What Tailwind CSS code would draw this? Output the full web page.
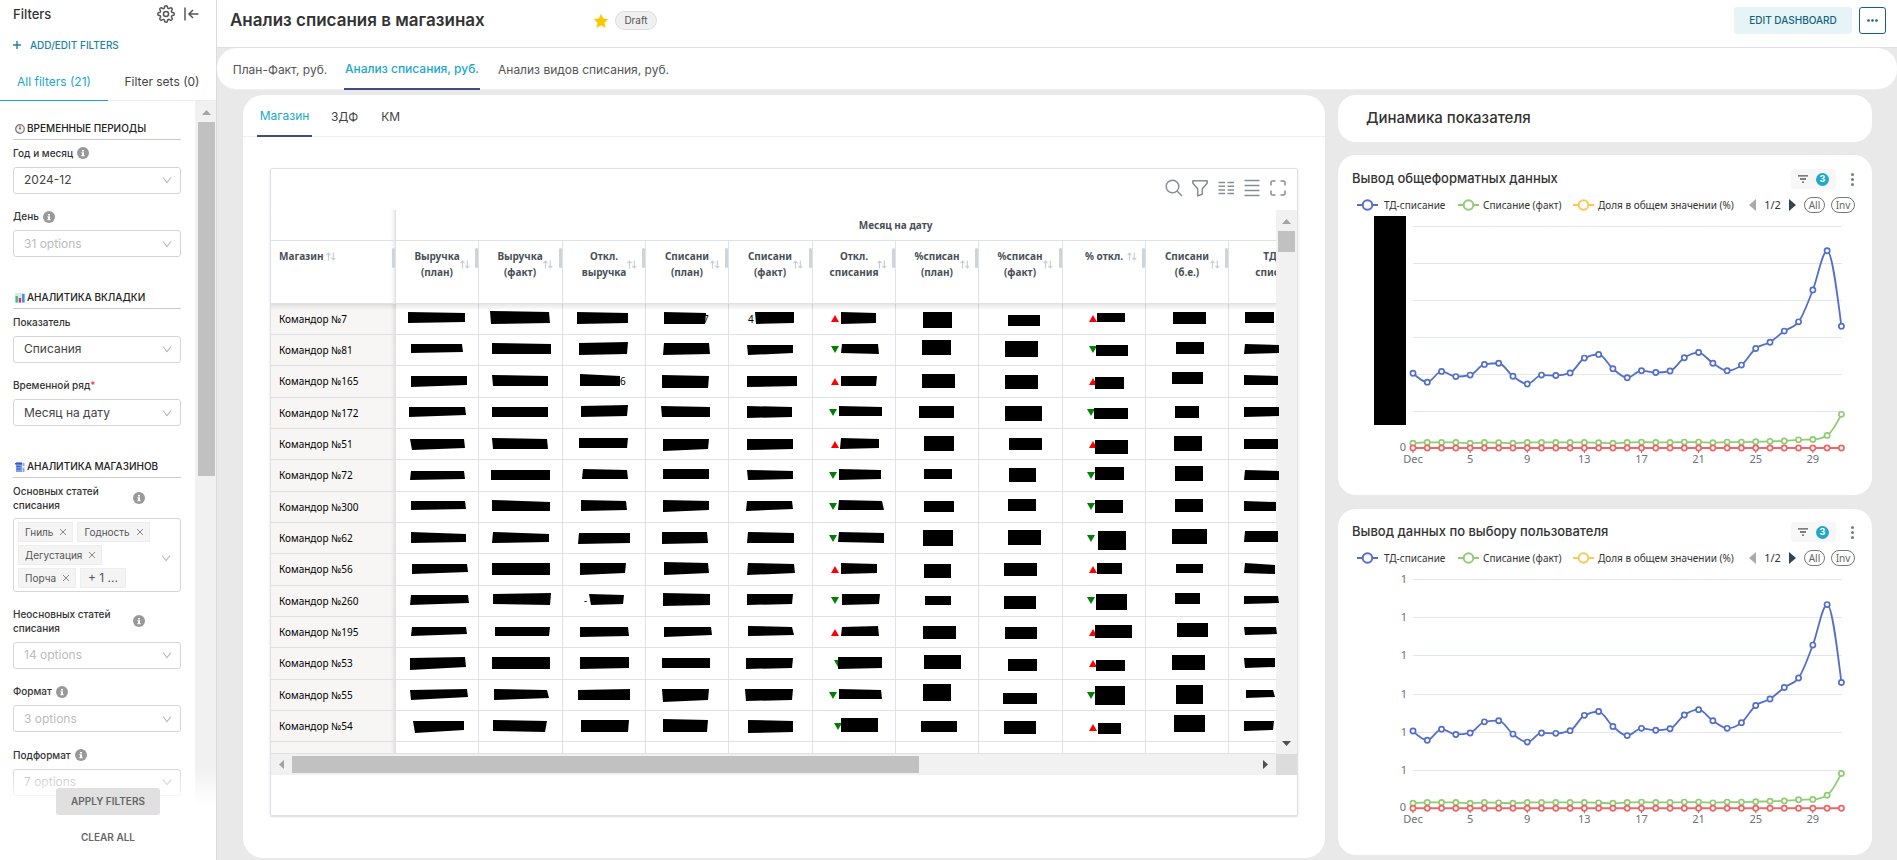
<!DOCTYPE html>
<html lang="ru">
<head>
<meta charset="utf-8">
<title>Анализ списания в магазинах</title>
<script src="https://cdn.jsdelivr.net/npm/@tailwindcss/browser@4"></script>
</head>
<body class="font-['Inter',sans-serif] text-[#333] bg-[#e9e9e9]">
<svg class="hidden">
  <symbol id="info" viewBox="0 0 12 12"><circle cx="6" cy="6" r="6" fill="#999"/><path d="M5 3h2v1.5H5zM4.4 5.2H7v3h.7v1H4.3v-1H5V6.2h-.6z" fill="#fff"/></symbol>
  <symbol id="chev" viewBox="0 0 10 8"><path d="M1 1.5l4 5 4-5" fill="none" stroke="#b8b8b8" stroke-width="1.1"/></symbol>
  <symbol id="sort" viewBox="0 0 10 9"><path d="M2.5 8.5v-7M.5 3.2l2-2 2 2M7.3.5v7M5.3 5.8l2 2 2-2" fill="none" stroke="#c8ced4" stroke-width="1.2"/></symbol>
</svg>
<div class="flex h-screen overflow-hidden">

  <aside class="relative flex w-[217px] shrink-0 flex-col border-r border-[#dcdcdc] bg-white">
    <div class="flex h-[27px] items-center pl-[13px] pr-[17px]">
      <h2 class="flex-1 text-[13px] leading-4 font-medium text-[#333]">Filters</h2>
      <button aria-label="Settings" class="mr-[9px]"><svg class="size-[18px]" viewBox="0 0 24 24" fill="none" stroke="#555" stroke-width="2"><circle cx="12" cy="12" r="3.4"/><path d="M19.4 15a1.65 1.65 0 0 0 .33 1.82l.06.06a2 2 0 0 1 0 2.83 2 2 0 0 1-2.83 0l-.06-.06a1.65 1.65 0 0 0-1.82-.33 1.65 1.65 0 0 0-1 1.51V21a2 2 0 0 1-2 2 2 2 0 0 1-2-2v-.09A1.65 1.65 0 0 0 9 19.4a1.65 1.65 0 0 0-1.82.33l-.06.06a2 2 0 0 1-2.83 0 2 2 0 0 1 0-2.83l.06-.06a1.65 1.65 0 0 0 .33-1.82 1.65 1.65 0 0 0-1.51-1H3a2 2 0 0 1-2-2 2 2 0 0 1 2-2h.09A1.65 1.65 0 0 0 4.6 9a1.65 1.65 0 0 0-.33-1.82l-.06-.06a2 2 0 0 1 0-2.83 2 2 0 0 1 2.83 0l.06.06a1.65 1.65 0 0 0 1.82.33H9a1.65 1.65 0 0 0 1-1.51V3a2 2 0 0 1 2-2 2 2 0 0 1 2 2v.09a1.65 1.65 0 0 0 1 1.51 1.65 1.65 0 0 0 1.82-.33l.06-.06a2 2 0 0 1 2.83 0 2 2 0 0 1 0 2.83l-.06.06a1.65 1.65 0 0 0-.33 1.82V9a1.65 1.65 0 0 0 1.51 1H21a2 2 0 0 1 2 2 2 2 0 0 1-2 2h-.09a1.65 1.65 0 0 0-1.51 1z"/></svg></button>
      <button aria-label="Collapse filters"><svg class="h-[14px] w-[15px]" viewBox="0 0 15 14" fill="none" stroke="#555" stroke-width="1.5"><path d="M1 .5v13M14.5 7H5M9 3L5 7l4 4"/></svg></button>
    </div>
    <button class="flex h-9 items-center gap-[9px] pl-[13px] text-[10px] font-medium text-[#1a85a0]"><svg class="size-2" viewBox="0 0 8 8" stroke="#1a85a0" stroke-width="1.4"><path d="M4 0v8M0 4h8"/></svg>ADD/EDIT FILTERS</button>
    <div class="flex h-[38px] border-b border-[#ececec] text-[12px]">
      <button class="-mb-px w-[108px] border-b border-[#20a7c9] text-[#20a7c9]">All filters (21)</button>
      <button class="flex-1 text-[#444]">Filter sets (0)</button>
    </div>
    <div class="flex min-h-0 flex-1 overflow-hidden">
      <div class="w-[195px] shrink-0 pl-[13px] pr-[14px] pt-[17px]">
        <h3 class="flex h-[22px] items-center gap-[2px] border-b border-[#ccc] pl-[2px] text-[10px] font-medium text-[#222]"><svg class="size-[10px]" viewBox="0 0 10 10" fill="none"><circle cx="5" cy="5" r="4.3" fill="#eee" stroke="#777" stroke-width="1.2"/><path d="M5 5V1.8" stroke="#d33"/><path d="M5 5.5V4" stroke="#444"/></svg>ВРЕМЕННЫЕ ПЕРИОДЫ</h3>
        <label for="ym" class="mt-[5px] flex h-4 items-center gap-1 text-[10px] font-medium">Год и месяц<svg class="size-3"><use href="#info"/></svg></label>
        <div class="relative mt-[5px]"><select id="ym" class="h-[27px] w-full appearance-none rounded-[3px] border border-[#d6d6d6] pl-[10px] text-[12px] text-[#444]"><option>2024-12</option></select><svg class="pointer-events-none absolute right-[9px] top-[10px] h-2 w-[10px]"><use href="#chev"/></svg></div>
        <label for="dd" class="mt-[15px] flex h-4 items-center gap-1 text-[10px] font-medium">День<svg class="size-3"><use href="#info"/></svg></label>
        <div class="relative mt-[5px]"><select id="dd" class="h-[27px] w-full appearance-none rounded-[3px] border border-[#d6d6d6] pl-[10px] text-[12px] text-[#bcbcbc]"><option>31 options</option></select><svg class="pointer-events-none absolute right-[9px] top-[10px] h-2 w-[10px]"><use href="#chev"/></svg></div>

        <h3 class="mt-[30px] flex h-[22px] items-center gap-[2px] border-b border-[#ccc] pl-[2px] text-[10px] font-medium text-[#222]"><svg class="size-[10px]" viewBox="0 0 10 10"><path d="M0 0h10v10H0z" fill="#dfe6ea"/><path d="M.5 3h2.3v6.500H.5z" fill="#1fc96b"/><path d="M3.800 5h2.300v4.500H3.800z" fill="#e5258d"/><path d="M7.200 1h2.300v8.500H7.200z" fill="#3d8fd1"/></svg>АНАЛИТИКА ВКЛАДКИ</h3>
        <label for="ind" class="mt-[5px] flex h-4 items-center text-[10px] font-medium">Показатель</label>
        <div class="relative mt-[5px]"><select id="ind" class="h-[27px] w-full appearance-none rounded-[3px] border border-[#d6d6d6] pl-[10px] text-[12px] text-[#444]"><option>Списания</option></select><svg class="pointer-events-none absolute right-[9px] top-[10px] h-2 w-[10px]"><use href="#chev"/></svg></div>
        <label for="ts" class="mt-[15px] flex h-4 items-center text-[10px] font-medium">Временной ряд<span class="text-[#e04355]">*</span></label>
        <div class="relative mt-[5px]"><select id="ts" class="h-[27px] w-full appearance-none rounded-[3px] border border-[#d6d6d6] pl-[10px] text-[12px] text-[#444]"><option>Месяц на дату</option></select><svg class="pointer-events-none absolute right-[9px] top-[10px] h-2 w-[10px]"><use href="#chev"/></svg></div>

        <h3 class="mt-[30px] flex h-[22px] items-center gap-[2px] border-b border-[#ccc] pl-[2px] text-[10px] font-medium text-[#222]"><svg class="size-[10px]" viewBox="0 0 10 10"><path d="M1 0h6v10H1z" fill="#7f9fe0"/><path d="M0 1h7v1.500H0zM1.500 4h4v1h-4zM1.500 6.500h4v1h-4z" fill="#3558c8"/><path d="M7.500 1h2v3h-2zM7.500 5.500h2V10h-2z" fill="#8da2f2"/></svg>АНАЛИТИКА МАГАЗИНОВ</h3>
        <div id="main-l" class="mt-[5px] flex h-[30px] items-center text-[10px] leading-[14px] font-medium"><span class="w-[120px]">Основных статей<br>списания</span><svg class="size-3"><use href="#info"/></svg></div>
        <div role="group" aria-labelledby="main-l" class="relative mt-[5px] flex h-[74px] flex-wrap content-start gap-x-1 gap-y-[3px] rounded-[3px] border border-[#d6d6d6] py-[3px] pl-1 pr-7 text-[10px] text-[#555]">
          <button class="flex h-5 items-center gap-[7px] border border-[#eee] bg-[#f4f4f4] px-[6px]">Гниль<svg class="size-[6px]" viewBox="0 0 6 6" stroke="#888"><path d="M0 0l6 6M6 0L0 6"/></svg></button>
          <button class="flex h-5 items-center gap-[7px] border border-[#eee] bg-[#f4f4f4] px-[6px]">Годность<svg class="size-[6px]" viewBox="0 0 6 6" stroke="#888"><path d="M0 0l6 6M6 0L0 6"/></svg></button>
          <button class="mr-3 flex h-5 items-center gap-[7px] border border-[#eee] bg-[#f4f4f4] px-[6px]">Дегустация<svg class="size-[6px]" viewBox="0 0 6 6" stroke="#888"><path d="M0 0l6 6M6 0L0 6"/></svg></button>
          <button class="flex h-5 items-center gap-[7px] border border-[#eee] bg-[#f4f4f4] px-[6px]">Порча<svg class="size-[6px]" viewBox="0 0 6 6" stroke="#888"><path d="M0 0l6 6M6 0L0 6"/></svg></button>
          <button class="flex h-5 items-center border border-[#eee] bg-[#f4f4f4] px-[7px] text-[12px]">+ 1 ...</button>
          <svg class="absolute right-[9px] top-[35px] h-2 w-[10px]"><use href="#chev"/></svg>
        </div>
        <label for="nm" class="mt-[14px] flex h-[30px] items-center text-[10px] leading-[14px] font-medium"><span class="w-[120px]">Неосновных статей<br>списания</span><svg class="size-3"><use href="#info"/></svg></label>
        <div class="relative mt-[5px]"><select id="nm" class="h-[27px] w-full appearance-none rounded-[3px] border border-[#d6d6d6] pl-[10px] text-[12px] text-[#bcbcbc]"><option>14 options</option></select><svg class="pointer-events-none absolute right-[9px] top-[10px] h-2 w-[10px]"><use href="#chev"/></svg></div>
        <label for="fm" class="mt-[15px] flex h-4 items-center gap-1 text-[10px] font-medium">Формат<svg class="size-3"><use href="#info"/></svg></label>
        <div class="relative mt-[5px]"><select id="fm" class="h-[27px] w-full appearance-none rounded-[3px] border border-[#d6d6d6] pl-[10px] text-[12px] text-[#bcbcbc]"><option>3 options</option></select><svg class="pointer-events-none absolute right-[9px] top-[10px] h-2 w-[10px]"><use href="#chev"/></svg></div>
        <label for="sf" class="mt-[15px] flex h-4 items-center gap-1 text-[10px] font-medium">Подформат<svg class="size-3"><use href="#info"/></svg></label>
        <div class="relative mt-[5px]"><select id="sf" class="h-[27px] w-full appearance-none rounded-[3px] border border-[#d6d6d6] pl-[10px] text-[12px] text-[#bcbcbc]"><option>7 options</option></select><svg class="pointer-events-none absolute right-[9px] top-[10px] h-2 w-[10px]"><use href="#chev"/></svg></div>
      </div>
      <div class="flex w-[21px] flex-col items-center bg-[#f1f1f1] pl-[1px] pt-[9px]">
        <svg class="mb-[7px] h-[5px] w-[9px]" viewBox="0 0 9 5"><path d="M0 5l4.500-5L9 5z" fill="#a3a3a3"/></svg>
        <div class="h-[354px] w-[17px] bg-[#c1c1c1]"></div>
      </div>
    </div>
    <div class="absolute inset-x-0 bottom-0 flex h-[92px] flex-col items-center bg-linear-to-b from-white/0 via-white via-40% to-white pt-5 text-[10px] font-semibold">
      <button class="h-[27px] w-[104px] shrink-0 rounded-[3px] bg-[#e0e0e0] font-semibold text-[#666]">APPLY FILTERS</button>
      <button class="mt-[9px] h-[27px] w-[104px] shrink-0 font-semibold text-[#666]">CLEAR ALL</button>
    </div>
  </aside>

  <div class="flex min-w-0 flex-1 flex-col">
    <header class="flex h-12 shrink-0 items-start border-b border-[#e0e0e0] bg-white pl-[13px] pr-[11px] pt-[7px]">
      <h1 class="w-[364px] text-[17px] leading-[27px] font-semibold text-[#333]">Анализ списания в магазинах</h1>
      <button aria-label="Favourite" class="mt-[7px]"><svg class="size-[14px]" viewBox="0 0 24 24" fill="#fcc700"><path d="M12 .8l3.500 7.300 8 1.100-5.800 5.600 1.400 8L12 19l-7.100 3.800 1.400-8L.5 9.200l8-1.100z" stroke="#fcc700" stroke-linejoin="round"/></svg></button>
      <span class="ml-[7px] mt-1 flex h-[19px] w-[42px] items-center justify-center rounded-full border border-[#dcdcdc] bg-[#f0f0f0] text-[10px] text-[#555]">Draft</span>
      <span class="flex-1"></span>
      <button class="h-[27px] w-[118px] rounded-[3px] bg-[#e6f4f8] text-[10px] font-medium text-[#156378]">EDIT DASHBOARD</button>
      <button aria-label="More actions" class="ml-[7px] flex h-[27px] w-[27px] items-center justify-center rounded-[3px] border border-[#156378]"><svg class="h-[3px] w-[11px]" viewBox="0 0 11 3" fill="#156378"><circle cx="1.500" cy="1.500" r="1.300"/><circle cx="5.500" cy="1.500" r="1.300"/><circle cx="9.500" cy="1.500" r="1.300"/></svg></button>
    </header>
    <nav class="flex h-[42px] shrink-0 gap-[11px] rounded-[20px] border-b border-[#f0f0f0] bg-white pl-[10px] text-[12px]">
      <button class="w-[106px] pt-[2px] text-[#555]">План-Факт, руб.</button>
      <button class="-mb-px w-[136px] border-b-2 border-[#444e7c] pt-[2px] font-medium whitespace-nowrap text-[#20a7c9]">Анализ списания, руб.</button>
      <button class="px-[7px] pt-[2px] text-[#555]">Анализ видов списания, руб.</button>
    </nav>

    <main class="grid min-h-0 flex-1 grid-cols-[1082fr_534fr] gap-[13px] pl-[26px] pr-[25px] pt-[5px]">
      <section class="mb-[2px] flex min-h-0 min-w-0 flex-col rounded-[20px] bg-white">
        <div class="flex h-[42px] shrink-0 gap-[15px] border-b border-[#f0f0f0] pl-[14px] text-[12px] text-[#444]">
          <button class="-mb-px w-[55px] border-b-2 border-[#444e7c] pt-[2px] text-[#20a7c9]">Магазин</button>
          <button class="px-1 pt-[2px]">ЗДФ</button>
          <button class="px-1 pt-[2px]">КМ</button>
        </div>
        <div class="mx-[27px] mt-[31px] mb-[42px] flex min-h-0 flex-1 flex-col rounded-[2px] border border-[#dee2e6] font-['Noto_Sans',sans-serif] shadow-[0_1px_2px_rgba(0,0,0,0.15)]">
          <div class="flex h-[41px] shrink-0 items-center justify-end gap-2 pb-[3px] pr-[10px] text-[#868e96]">
            <button aria-label="Search"><svg class="size-[18px]" viewBox="0 0 18 18" fill="none" stroke="currentColor" stroke-width="1.500"><circle cx="7.500" cy="7.500" r="6.300"/><path d="M12 12l5 5"/></svg></button>
            <button aria-label="Filter"><svg class="size-[18px]" viewBox="0 0 18 18" fill="none" stroke="currentColor" stroke-width="1.500" stroke-linejoin="round"><path d="M1.800 1.800h14.400v2.400L11.300 9.800v5.400l-4.600 1.700V9.800L1.800 4.200z"/></svg></button>
            <button aria-label="Columns"><svg class="size-[18px]" viewBox="0 0 18 18" fill="none" stroke="currentColor" stroke-width="1.500"><path d="M1.500 3.500h6.500M1.500 7.200h6.500M1.500 10.900h6.500M1.500 14.600h6.500M10.500 3.500H17M10.500 7.200H17M10.500 10.900H17M10.500 14.600H17"/></svg></button>
            <button aria-label="Density"><svg class="size-[18px]" viewBox="0 0 18 18" fill="none" stroke="currentColor" stroke-width="1.500"><path d="M1.500 1.500h15M1.500 6.500h15M1.500 11.500h15M1.500 16.500h15"/></svg></button>
            <button aria-label="Full screen"><svg class="size-[18px]" viewBox="0 0 18 18" fill="none" stroke="currentColor" stroke-width="1.500" stroke-linecap="round"><path d="M2 6V3.500A1.500 1.500 0 0 1 3.500 2H6M12 2h2.500A1.500 1.500 0 0 1 16 3.500V6M16 12v2.500a1.500 1.500 0 0 1-1.500 1.500H12M6 16H3.500A1.500 1.500 0 0 1 2 14.500V12"/></svg></button>
          </div>
          <div class="relative flex min-h-0 flex-1">
            <div class="min-w-0 flex-1 overflow-hidden border-b border-[#dee2e6]">
              <table class="w-[1124px] table-fixed border-separate border-spacing-0">
                <colgroup><col class="w-[125px]"><col class="w-[83px]"><col class="w-[84px]"><col class="w-[83px]"><col class="w-[83px]"><col class="w-[84px]"><col class="w-[83px]"><col class="w-[83px]"><col class="w-[84px]"><col class="w-[83px]"><col class="w-[83px]"><col class="w-[83px]"><col class="w-[83px]"></colgroup>
                <thead class="text-[10px] leading-4 font-semibold text-[#495057]">
                  <tr><th class="h-[31px] border-r border-b border-[#dee2e6] shadow-[inset_-4px_0_4px_-3px_rgba(0,0,0,0.12)]"></th><th colspan="12" class="h-[31px] border-b border-[#dee2e6] p-0">Месяц на дату</th></tr>
                  <tr id="heads"></tr>
                </thead>
                <tbody id="rows" class="text-[10px] text-black"></tbody>
              </table>
            </div>
            <div class="pointer-events-none absolute left-0 right-[21px] top-[94px] h-[6px] bg-linear-to-b from-black/10 to-black/0"></div>
            <svg id="masks" class="pointer-events-none absolute left-0 top-[94px] z-10 h-[449px] w-[1010px]" viewBox="271 304 1010 449"></svg>
            <div class="flex w-[21px] shrink-0 flex-col items-center bg-[#f1f1f1] pt-[9px] pb-2">
              <svg class="mb-[7px] h-[5px] w-[9px]" viewBox="0 0 9 5"><path d="M0 5l4.500-5L9 5z" fill="#a3a3a3"/></svg>
              <div class="h-[21px] w-[17px] bg-[#c1c1c1]"></div>
              <span class="flex-1"></span>
              <svg class="h-[5px] w-[9px]" viewBox="0 0 9 5"><path d="M0 0l4.500 5L9 0z" fill="#505050"/></svg>
            </div>
          </div>
          <div class="flex h-[21px] shrink-0">
            <div class="flex flex-1 items-center bg-[#f1f1f1] px-2">
              <svg class="mr-2 h-[9px] w-[5px]" viewBox="0 0 5 9"><path d="M5 0L0 4.500 5 9z" fill="#a3a3a3"/></svg>
              <div class="h-[17px] w-[627px] bg-[#c1c1c1]"></div>
              <span class="flex-1"></span>
              <svg class="h-[9px] w-[5px]" viewBox="0 0 5 9"><path d="M0 0l5 4.500L0 9z" fill="#505050"/></svg>
            </div>
            <div class="w-[21px] bg-[#dcdcdc]"></div>
          </div>
          <div class="h-10 shrink-0"></div>
        </div>
      </section>

      <div class="flex min-h-0 min-w-0 flex-col">
        <section class="mb-[13px] flex h-[47px] shrink-0 items-center rounded-[18px] bg-white pl-[28px]"><h2 class="text-[15px] font-medium">Динамика показателя</h2></section>
        <section class="mb-[14px] rounded-[18px] bg-white pt-[13px]">
          <div class="flex h-[22px] items-center pl-[14px] pr-[18px]"><h3 class="flex-1 text-[13px] font-medium">Вывод общеформатных данных</h3>
            <button aria-label="Applied filters: 3" class="mr-[15px] flex h-5 items-center gap-2 rounded-[3px] bg-[#f7f7f7] px-[7px]"><svg class="h-2 w-[10px]" viewBox="0 0 10 8" stroke="#555" stroke-width="1.300"><path d="M0 .8h10M2 4h6M4 7.200h2"/></svg><span class="flex size-[13px] items-center justify-center rounded-full bg-[#20a7c9] text-[9px] font-bold text-white">3</span></button>
            <button aria-label="Chart menu"><svg class="h-[13px] w-[3px]" viewBox="0 0 3 13" fill="#6b7f8c"><circle cx="1.500" cy="1.500" r="1.500"/><circle cx="1.500" cy="6.500" r="1.500"/><circle cx="1.500" cy="11.500" r="1.500"/></svg></button></div>
          <div class="mt-[7px] h-4" data-legend></div>
          <svg class="mt-[1px] block w-full" viewBox="0 0 534 281" data-chart="37" data-cover="1"></svg>
        </section>
        <section class="rounded-[18px] bg-white pt-[12px]">
          <div class="flex h-[22px] items-center pl-[14px] pr-[18px]"><h3 class="flex-1 text-[13px] font-medium">Вывод данных по выбору пользователя</h3>
            <button aria-label="Applied filters: 3" class="mr-[15px] flex h-5 items-center gap-2 rounded-[3px] bg-[#f7f7f7] px-[7px]"><svg class="h-2 w-[10px]" viewBox="0 0 10 8" stroke="#555" stroke-width="1.300"><path d="M0 .8h10M2 4h6M4 7.200h2"/></svg><span class="flex size-[13px] items-center justify-center rounded-full bg-[#20a7c9] text-[9px] font-bold text-white">3</span></button>
            <button aria-label="Chart menu"><svg class="h-[13px] w-[3px]" viewBox="0 0 3 13" fill="#6b7f8c"><circle cx="1.500" cy="1.500" r="1.500"/><circle cx="1.500" cy="6.500" r="1.500"/><circle cx="1.500" cy="11.500" r="1.500"/></svg></button></div>
          <div class="mt-[7px] h-4" data-legend></div>
          <svg class="mt-[1px] block w-full" viewBox="0 0 534 288" data-chart="38.200"></svg>
        </section>
      </div>
    </main>
  </div>
</div>

<script>
// Table header
const heads = [['Выручка','(план)'],['Выручка','(факт)'],['Откл.','выручка'],['Списани','(план)'],['Списани','(факт)'],['Откл.','списания'],['%списан','(план)'],['%списан','(факт)'],['% откл.',''],['Списани','(б.е.)'],['ТД','списа'],['','']];
const handle = '<span class="absolute right-0 top-[7px] h-5 w-[3px] rounded-[2px] bg-[#ced4da]"></span>';
const sort = '<svg class="h-[9px] w-[10px] shrink-0"><use href="#sort"/></svg>';
document.getElementById('heads').innerHTML =
  `<th class="relative h-[63px] border-r border-b border-[#dee2e6] p-0 pl-2 pt-[7px] align-top shadow-[inset_-4px_0_4px_-3px_rgba(0,0,0,0.12)]"><div class="flex items-center gap-[2px]">Магазин${sort}</div>${handle}</th>` +
  heads.map(([a, b]) => `<th class="relative h-[63px] border-r border-b border-[#dee2e6] p-0 pl-[19px] pt-[7px] align-top"><div class="flex items-center gap-[1px]"><div class="flex w-[44px] flex-col items-center whitespace-nowrap"><span>${a}</span><span>${b}</span></div>${sort}</div>${handle}</th>`).join('');

// Table rows
const stores = [7, 81, 165, 172, 51, 72, 300, 62, 56, 260, 195, 53, 55, 54, ''];
document.getElementById('rows').innerHTML = stores.map(n =>
  `<tr><td class="${stores.indexOf(n) % 3 === 2 ? 'h-8' : 'h-[31px]'} border-r border-b border-[#dee2e6] bg-[#f7f6f4] p-0 pl-2 shadow-[inset_-4px_0_4px_-3px_rgba(0,0,0,0.12)]">${n === '' ? '' : 'Командор №' + n}</td>` +
  '<td class="border-r border-b border-[#dee2e6] p-0"></td>'.repeat(12) + '</tr>').join('');

// Masked values: 8 numbers are a quad, 4 are opposite corners
const masks = `408 312 465 313 465 322 408 323,490 311 549 312 550 323 491 324,577 312 628 313 628 323 577 324,664 312 706 313 705 324 664 324,755 312 794 312 794 323 756 324,841 312 876 313 876 323 841 324,923 312 952 328,1008 315 1040 326,1097 313 1125 322,1173 312 1206 324,1245 312 1274 323
411 344 462 344 463 352 411 353,492 343 551 344 551 354 492 354,579 343 628 342 627 354 579 355,664 343 709 343 710 354 663 355,747 345 793 345 793 353 748 355,842 344 878 344 879 354 841 353,922 340 951 355,1005 341 1038 357,1096 345 1128 356,1176 342 1204 354,1245 344 1279 345 1279 353 1244 354
411 376 467 376 467 385 411 387,492 375 548 376 548 386 493 386,580 374 620 376 620 386 580 386,662 375 709 376 708 388 662 388,747 376 797 376 797 386 747 387,841 376 877 376 876 386 841 386,922 374 955 388,1005 375 1038 389,1095 377 1124 389,1172 372 1203 384,1244 375 1278 376 1278 385 1244 385
409 407 465 407 466 415 409 417,492 407 548 407 548 417 492 417,581 406 628 405 627 416 581 417,661 406 710 407 710 417 662 417,747 406 792 407 792 417 747 418,839 406 882 407 882 416 839 416,919 406 954 418,1005 406 1042 421,1094 408 1128 419,1175 406 1199 418,1244 407 1279 407 1279 416 1244 417
410 439 464 439 465 448 412 450,492 438 547 439 548 449 493 449,579 438 628 438 627 448 579 448,663 439 709 439 708 449 663 451,747 439 793 439 793 449 747 450,841 438 879 439 879 448 840 449,924 436 954 451,1009 438 1042 450,1095 440 1128 454,1174 436 1202 451,1244 439 1278 449
411 471 464 471 465 479 410 480,491 470 550 480,583 469 627 470 628 479 582 479,663 469 709 479,747 470 793 471 793 479 748 480,839 469 881 470 881 479 839 480,924 469 952 479,1009 468 1036 482,1095 467 1124 480,1175 466 1203 481,1245 470 1279 471 1279 480 1244 480
411 501 465 501 466 509 411 510,492 500 550 502 550 511 492 511,581 500 626 501 627 510 581 511,663 500 709 501 709 510 663 512,747 501 792 501 793 509 746 511,839 500 882 501 884 510 838 510,924 501 954 512,1008 499 1036 511,1095 500 1123 513,1175 499 1203 512,1244 501 1276 502 1276 511 1244 511
411 532 466 534 466 542 411 543,493 532 549 534 549 542 492 543,579 533 630 533 630 543 578 544,662 532 707 532 708 543 662 544,748 532 794 533 794 543 747 543,839 532 884 533 884 543 838 542,923 530 953 546,1008 530 1041 545,1098 531 1126 550,1172 529 1207 544,1245 531 1278 531 1278 542 1244 542
412 564 467 564 468 572 412 574,492 563 550 575,580 563 626 563 625 573 580 575,664 562 708 563 709 573 664 575,748 563 794 564 795 573 747 575,841 563 877 564 877 573 841 574,924 564 951 578,1004 563 1037 576,1097 563 1122 574,1176 564 1203 573,1245 563 1275 565 1275 574 1244 573
411 595 468 595 469 603 410 605,493 594 551 593 550 605 493 604,589 594 624 595 623 604 591 605,663 593 710 594 710 605 663 606,747 594 793 594 792 604 747 605,842 594 880 594 879 604 842 605,925 596 951 605,1004 596 1036 609,1096 594 1127 610,1175 593 1200 604,1244 596 1278 596 1279 603 1244 604
412 627 466 627 467 634 411 636,495 627 550 627 549 636 495 636,580 627 628 627 629 636 580 637,664 627 711 627 712 635 664 637,748 626 792 627 794 635 748 636,842 627 878 626 879 636 841 636,923 626 956 639,1005 627 1037 639,1095 625 1132 638,1177 623 1208 637,1244 627 1276 627 1277 634 1245 635
410 658 465 657 466 667 410 670,492 657 550 669,580 657 629 657 629 668 580 669,662 658 710 668,746 658 793 658 792 668 746 669,838 657 882 657 882 668 838 669,924 655 961 669,1008 659 1037 671,1096 660 1125 671,1172 655 1205 670,1244 658 1275 658 1275 667 1245 668
410 690 467 689 468 697 411 700,494 689 547 690 549 698 494 700,578 690 630 689 630 700 578 700,662 689 709 689 708 700 663 702,745 689 793 689 792 700 746 701,839 689 881 690 882 699 839 699,923 684 951 701,1003 693 1037 704,1095 686 1125 705,1176 685 1203 704,1246 690 1273 690 1275 697 1246 698
413 721 464 721 464 730 415 733,493 720 547 721 545 732 493 731,581 720 629 720 628 732 581 732,663 719 708 720 707 732 663 732,748 720 793 721 793 732 748 733,841 718 878 732,921 721 957 732,1004 721 1036 734,1098 723 1121 734,1174 715 1205 732,1244 721 1274 721 1273 730 1244 731`;
// Trend arrows: x, y, direction
const arrows = [[831,315,1],[1089,315,1],[831,346,0],[1089,346,0],[831,378,1],[1089,378,1],[829,409,0],[1087,409,0],[831,441,1],[1089,441,1],[829,472,0],[1087,472,0],[829,503,0],[1087,503,0],[829,535,0],[1087,535,0],[831,566,1],[1089,566,1],[831,597,0],[1087,597,0],[831,629,1],[1089,629,1],[834,660,0],[1089,660,1],[829,692,0],[1087,692,0],[834,723,0],[1089,724,1]];
const digits = [[703,323,'7'],[748,323,'4'],[620,385,'6'],[584,604,'-']];
document.getElementById('masks').innerHTML =
  arrows.map(([x, y, up]) => up ? `<path fill="red" d="M${x} ${y + 7}h8l-4-7z"/>` : `<path fill="green" d="M${x} ${y}h8l-4 7z"/>`).join('') +
  digits.map(([x, y, t]) => `<text x="${x}" y="${y}" font-size="10">${t}</text>`).join('') +
  masks.split(/[,\n]/).map(s => { const p = s.split(' '); return p.length === 8 ? `<polygon points="${s}"/>` : `<rect x="${p[0]}" y="${p[1]}" width="${p[2] - p[0]}" height="${p[3] - p[1]}"/>`; }).join('');

// Chart legends
const item = (c, t, cls) => `<button class="flex items-center ${cls}"><svg class="h-3 w-[21px]" viewBox="0 0 21 12" fill="#fff" stroke-width="2" stroke="${c}"><path d="M0 6h21"/><circle cx="10.500" cy="6" r="4.800"/></svg>${t}</button>`;
document.querySelectorAll('[data-legend]').forEach(el => el.innerHTML =
  `<div class="flex h-4 items-center pl-[19px] font-['Noto_Sans',sans-serif] text-[10px] whitespace-nowrap text-[#333]">` +
  item('#5470c6', 'ТД-списание', 'w-[101px] gap-[6px]') + item('#91cc75', 'Списание (факт)', 'w-[115px] gap-1') + item('#fac858', 'Доля в общем значении (%)', 'w-[176px] gap-1') +
  `<button aria-label="Previous"><svg class="h-3 w-[7px]" viewBox="0 0 7 12"><path d="M7 0v12L0 6z" fill="#aaa"/></svg></button><span class="w-[33px] text-center text-[11px]">1/2</span><button aria-label="Next"><svg class="h-3 w-[7px]" viewBox="0 0 7 12"><path d="M0 0v12l7-6z" fill="#2f4554"/></svg></button>
  <button class="ml-2 h-4 w-[21px] rounded-full border border-[#777] text-[10px] leading-[14px] text-[#666]">All</button><button class="ml-[6px] h-4 w-6 rounded-full border border-[#777] text-[10px] leading-[14px] text-[#666]">Inv</button></div>`);

// Line charts, values in units of one grid step
const blue = [2.02,1.78,2.07,1.93,1.97,2.26,2.29,1.94,1.73,1.97,1.96,2.03,2.43,2.53,2.14,1.9,2.09,2.04,2.08,2.44,2.58,2.29,2.09,2.24,2.69,2.86,3.16,3.41,4.27,5.33,3.29];
const green = [.13,.15,.15,.15,.13,.15,.14,.13,.15,.15,.15,.15,.15,.14,.13,.15,.16,.15,.15,.16,.16,.14,.16,.16,.17,.18,.19,.22,.23,.34,.91];
const red = blue.map(() => 0);
function curve(p) {
  const n = p.length, h = p[1][0] - p[0][0];
  const s = p.slice(1).map((q, i) => (q[1] - p[i][1]) / h);
  const t = p.map((_, i) => i && i < n - 1 ? (Math.sign(s[i - 1]) + Math.sign(s[i])) * Math.min(Math.abs(s[i - 1]), Math.abs(s[i]), Math.abs(s[i - 1] + s[i]) / 4) : 0);
  t[0] = (3 * s[0] - t[1]) / 2; t[n - 1] = (3 * s[n - 2] - t[n - 2]) / 2;
  let d = `M${p[0]}`;
  for (let i = 1; i < n; i++) d += `C${p[i - 1][0] + h / 3} ${p[i - 1][1] + t[i - 1] * h / 3} ${p[i][0] - h / 3} ${p[i][1] - t[i] * h / 3} ${p[i]}`;
  return d;
}
document.querySelectorAll('[data-chart]').forEach(svg => {
  const step = +svg.dataset.chart, base = 12 + step * 6, cover = svg.dataset.cover;
  let out = '';
  for (let i = 0; i < 6; i++) {
    const y = Math.round(12 + i * step) + .5;
    out += `<path d="M75 ${y}H504" stroke="#e0e6f1"/>`;
    if (!cover) out += `<text x="69" y="${y + 3}" text-anchor="end">1</text>`;
  }
  if (cover) out += '<path d="M36 2h32v209H36z" fill="#000"/>';
  out += `<path d="M75 ${base + .5}H504" stroke="#6e7079"/><text x="68" y="${base + 3}" text-anchor="end">0</text>`;
  ['Dec', 5, 9, 13, 17, 21, 25, 29].forEach((t, i) => { const x = 75 + i * 4 * 14.28; out += `<path d="M${x} ${base}v5" stroke="#6e7079"/><text x="${x}" y="${base + 15}" text-anchor="middle">${t}</text>`; });
  [[blue, '#5470c6'], [green, '#91cc75'], [red, '#ee6666']].forEach(([v, c]) => {
    const p = v.map((q, i) => [75 + i * 14.28, base - q * step]);
    out += `<path d="${curve(p)}" fill="none" stroke="${c}" stroke-width="1.800"/>` + p.map(([x, y]) => `<circle cx="${x}" cy="${y}" r="2.600" fill="#fff" stroke="${c}" stroke-width="1.700"/>`).join('');
  });
  svg.innerHTML = `<g font-family="Noto Sans, sans-serif" font-size="11" fill="#6e7079">${out}</g>`;
});
</script>
</body>
</html>
